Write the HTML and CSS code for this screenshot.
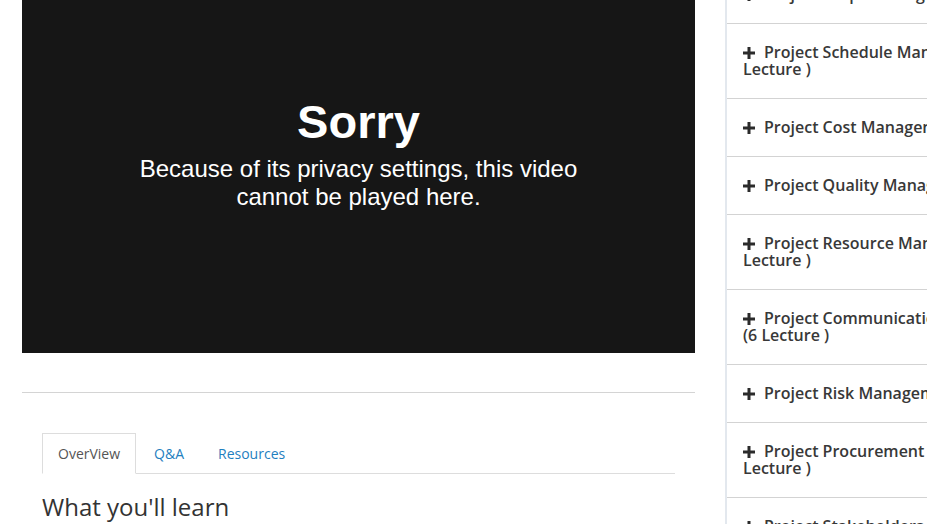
FILE: index.html
```html
<!DOCTYPE html>
<html lang="en">
<head>
<meta charset="utf-8">
<title>Course lecture</title>
<link rel="stylesheet" href="styles.css">
</head>
<body>
<div class="page">
  <main class="main">
    <div class="video">
      <div class="msg">
        <h1 class="msg-title">Sorry</h1>
        <p class="msg-text">Because of its privacy settings, this video cannot be played here.</p>
      </div>
    </div>
    <div class="divider"></div>
    <section class="details">
      <ul class="tabs">
        <li class="tab active">OverView</li>
        <li class="tab">Q&amp;A</li>
        <li class="tab">Resources</li>
      </ul>
      <h2 class="learn">What you'll learn</h2>
    </section>
  </main>
  <aside class="sidebar">
    <ul class="sections">
      <li class="section"><svg class="plus" viewBox="0 0 12 12"><path d="M4.5 0h3v4.5H12v3H7.5V12h-3V7.5H0v-3h4.5z"/></svg>Project Scope Management (6 Lecture )</li>
      <li class="section"><svg class="plus" viewBox="0 0 12 12"><path d="M4.5 0h3v4.5H12v3H7.5V12h-3V7.5H0v-3h4.5z"/></svg>Project Schedule Management (8 Lecture )</li>
      <li class="section"><svg class="plus" viewBox="0 0 12 12"><path d="M4.5 0h3v4.5H12v3H7.5V12h-3V7.5H0v-3h4.5z"/></svg>Project Cost Management (5 Lecture )</li>
      <li class="section"><svg class="plus" viewBox="0 0 12 12"><path d="M4.5 0h3v4.5H12v3H7.5V12h-3V7.5H0v-3h4.5z"/></svg>Project Quality Management (4 Lecture )</li>
      <li class="section"><svg class="plus" viewBox="0 0 12 12"><path d="M4.5 0h3v4.5H12v3H7.5V12h-3V7.5H0v-3h4.5z"/></svg>Project Resource Management (6 Lecture )</li>
      <li class="section"><svg class="plus" viewBox="0 0 12 12"><path d="M4.5 0h3v4.5H12v3H7.5V12h-3V7.5H0v-3h4.5z"/></svg>Project Communications Management (6 Lecture )</li>
      <li class="section"><svg class="plus" viewBox="0 0 12 12"><path d="M4.5 0h3v4.5H12v3H7.5V12h-3V7.5H0v-3h4.5z"/></svg>Project Risk Management (7 Lecture )</li>
      <li class="section"><svg class="plus" viewBox="0 0 12 12"><path d="M4.5 0h3v4.5H12v3H7.5V12h-3V7.5H0v-3h4.5z"/></svg>Project Procurement Management (5 Lecture )</li>
      <li class="section"><svg class="plus" viewBox="0 0 12 12"><path d="M4.5 0h3v4.5H12v3H7.5V12h-3V7.5H0v-3h4.5z"/></svg>Project Stakeholders Management (4 Lecture )</li>
    </ul>
  </aside>
</div>
</body>
</html>
```
FILE: styles.css
```css
html, body {
  margin: 0;
  padding: 0;
  height: 100%;
  overflow: hidden;
  background: #fff;
}
body {
  font-family: "Open Sans", "Liberation Sans", sans-serif;
  color: #333;
}
.page {
  display: flex;
  gap: 30px;
  padding-left: 22px;
  width: max-content;
  min-height: 100%;
}
.main {
  width: 673px;
  flex: none;
}
.video {
  height: 353px;
  background: #161616;
  display: flex;
  justify-content: center;
  box-sizing: border-box;
  padding-top: 98px;
}
.msg {
  text-align: center;
  color: #fff;
  font-family: "Liberation Sans", Arial, sans-serif;
}
.msg-title {
  margin: 0;
  font-size: 47px;
  line-height: 47px;
  font-weight: bold;
}
.msg-text {
  margin: 10px auto 0;
  width: 470px;
  font-size: 24px;
  line-height: 28px;
}
.divider {
  margin-top: 39px;
  border-top: 1px solid #d4d4d4;
}
.details {
  padding: 0 20px;
}
.tabs {
  list-style: none;
  margin: 40px 0 0;
  padding: 0;
  display: flex;
  border-bottom: 1px solid #ddd;
}
.tab {
  margin: 0 2px -1px 0;
  padding: 10px 15px 9px;
  border: 1px solid transparent;
  font-size: 14px;
  line-height: 20px;
  color: #1f80c0;
}
.tab.active {
  color: #555;
  border-color: #ddd #ddd transparent;
  background: #fff;
}
.learn {
  margin: 20px 0 0;
  font-size: 24px;
  line-height: 1.1;
  font-weight: 400;
  color: #333;
}
.sidebar {
  flex: none;
  width: 365px;
  border-left: 2px solid #e3e8ee;
}
.sections {
  list-style: none;
  margin: -34px 0 0;
  padding: 0;
}
.section {
  padding: 20px 15px 20px 16px;
  border-bottom: 1px solid #d3d3d3;
  font-size: 16px;
  line-height: 17px;
  font-weight: 600;
  color: #383838;
}
.plus {
  width: 12px;
  height: 12px;
  fill: #2b2b2b;
  vertical-align: -1px;
  margin-right: 9px;
}
```
